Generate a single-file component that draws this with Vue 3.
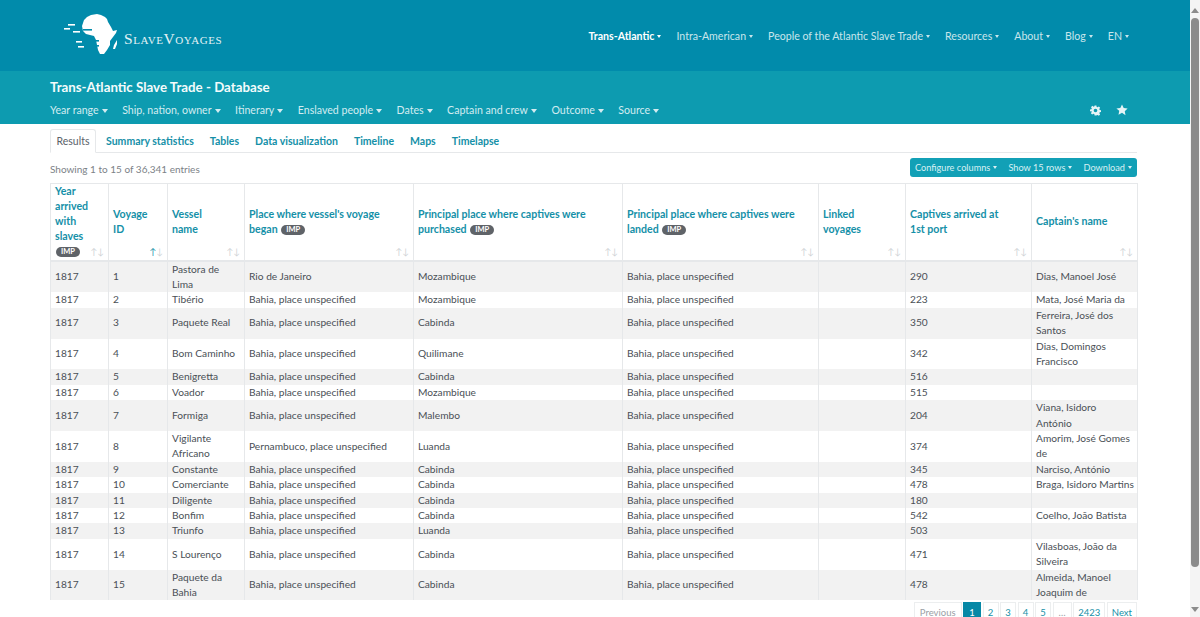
<script setup>
const topLinks = ['Trans-Atlantic', 'Intra-American', 'People of the Atlantic Slave Trade', 'Resources', 'About', 'Blog', 'EN']
const filters = ['Year range', 'Ship, nation, owner', 'Itinerary', 'Enslaved people', 'Dates', 'Captain and crew', 'Outcome', 'Source']
const tabs = ['Results', 'Summary statistics', 'Tables', 'Data visualization', 'Timeline', 'Maps', 'Timelapse']
const pages = ['Previous', '1', '2', '3', '4', '5', '…', '2423', 'Next']

const columns = [
  { w: 58, title: 'Year arrived with slaves', imp: true },
  { w: 59, title: 'Voyage ID', sorted: true },
  { w: 77, title: 'Vessel name' },
  { w: 169, title: "Place where vessel's voyage began", imp: true },
  { w: 209, title: 'Principal place where captives were purchased', imp: true },
  { w: 196, title: 'Principal place where captives were landed', imp: true },
  { w: 87, title: 'Linked voyages' },
  { w: 126, title: 'Captives arrived at 1st port' },
  { w: 106, title: "Captain's name" }
]

const bahia = 'Bahia, place unspecified'
const rows = [
  [1, 'Pastora de Lima', 'Rio de Janeiro', 'Mozambique', 290, 'Dias, Manoel José'],
  [2, 'Tibério', bahia, 'Mozambique', 223, 'Mata, José Maria da'],
  [3, 'Paquete Real', bahia, 'Cabinda', 350, 'Ferreira, José dos Santos'],
  [4, 'Bom Caminho', bahia, 'Quilimane', 342, 'Dias, Domingos Francisco'],
  [5, 'Benigretta', bahia, 'Cabinda', 516, ''],
  [6, 'Voador', bahia, 'Mozambique', 515, ''],
  [7, 'Formiga', bahia, 'Malembo', 204, 'Viana, Isidoro António'],
  [8, 'Vigilante Africano', 'Pernambuco, place unspecified', 'Luanda', 374, 'Amorim, José Gomes de'],
  [9, 'Constante', bahia, 'Cabinda', 345, 'Narciso, António'],
  [10, 'Comerciante', bahia, 'Cabinda', 478, 'Braga, Isidoro Martins'],
  [11, 'Diligente', bahia, 'Cabinda', 180, ''],
  [12, 'Bonfim', bahia, 'Cabinda', 542, 'Coelho, João Batista'],
  [13, 'Triunfo', bahia, 'Luanda', 503, ''],
  [14, 'S Lourenço', bahia, 'Cabinda', 471, 'Vilasboas, João da Silveira'],
  [15, 'Paquete da Bahia', bahia, 'Cabinda', 478, 'Almeida, Manoel Joaquim de']
]
</script>

<template>
  <div class="window">
    <div class="page">
      <header class="topbar">
        <a class="logo">
          <svg width="60" height="46" viewBox="0 0 60 46">
            <path class="land" d="M20 8 L23 5 L27 3 L33 2 L37 3 L41 5 L43 7 L44 10 L47 15 L49 19 L53 18 L52 21 L49 25 L46 29 L46 33 L43 38 L40 42 L36 42 L34 38 L33 33 L32 28 L30 24 L26 23 L22 22 L19 19 L18 14 Z" />
            <path class="land" d="M50 33 L53 28 L53 32 L51 37 L49 37 Z" />
            <g class="dash">
              <rect x="4" y="12" width="7" height="1.6" />
              <rect x="0" y="16" width="6" height="1.6" />
              <rect x="9" y="19" width="7" height="1.6" />
              <rect x="12" y="29" width="6" height="1.6" />
              <rect x="14" y="34" width="6" height="1.6" />
            </g>
            <g class="notch">
              <rect x="19" y="17" width="9" height="1.6" />
              <rect x="31" y="28" width="4" height="1.6" />
              <rect x="32" y="33" width="3" height="1.6" />
            </g>
          </svg>
          <span class="logo-text">SlaveVoyages</span>
        </a>
        <nav class="toplinks">
          <a v-for="(l, i) in topLinks" :key="l" :class="{ active: i === 0 }">{{ l }}<i class="caret small"></i></a>
        </nav>
      </header>

      <section class="subbar">
        <h1>Trans-Atlantic Slave Trade - Database</h1>
        <div class="filter-row">
          <a v-for="f in filters" :key="f">{{ f }}<i class="caret"></i></a>
          <span class="tools">
            <svg width="11" height="11" viewBox="0 0 24 24"><path d="M10 1h4l.6 3.2 2 .8 2.7-1.8 2.8 2.8-1.8 2.7.8 2 3.200.6v4l-3.200.6-.8 2 1.800 2.700-2.800 2.800-2.700-1.800-2 .8L14 23h-4l-.6-3.200-2-.8-2.700 1.800-2.800-2.800 1.800-2.700-.8-2L0 14v-4l3.200-.6.8-2L2.200 4.700 5 1.900l2.700 1.800 2-.8zM12 8a4 4 0 1 0 0 8 4 4 0 0 0 0-8z" fill-rule="evenodd" /></svg>
            <svg width="12" height="12" viewBox="0 0 24 24"><path d="M12 1l3.400 7.200 7.800 1-5.700 5.400 1.500 7.800L12 17.600l-7 3.800 1.500-7.800L.8 9.200l7.800-1z" /></svg>
          </span>
        </div>
      </section>

      <main class="content">
        <ul class="tabs">
          <li v-for="(t, i) in tabs" :key="t" :class="{ active: i === 0 }">{{ t }}</li>
        </ul>

        <div class="toolbar">
          <span class="entries">Showing 1 to 15 of 36,341 entries</span>
          <div class="btn-group">
            <a>Configure columns<i class="caret small"></i></a>
            <a>Show 15 rows<i class="caret small"></i></a>
            <a>Download<i class="caret small"></i></a>
          </div>
        </div>

        <table>
          <colgroup>
            <col v-for="c in columns" :key="c.title" :style="{ width: c.w + 'px' }" />
          </colgroup>
          <thead>
            <tr>
              <th v-for="c in columns" :key="c.title">
                {{ c.title }}
                <span v-if="c.imp" class="imp">IMP</span>
                <span class="sort"><b :class="{ on: c.sorted }">↑</b><b>↓</b></span>
              </th>
            </tr>
          </thead>
          <tbody>
            <tr v-for="r in rows" :key="r[0]">
              <td>1817</td>
              <td>{{ r[0] }}</td>
              <td>{{ r[1] }}</td>
              <td>{{ r[2] }}</td>
              <td>{{ r[3] }}</td>
              <td>{{ bahia }}</td>
              <td></td>
              <td>{{ r[4] }}</td>
              <td>{{ r[5] }}</td>
            </tr>
          </tbody>
        </table>

        <ul class="pager">
          <li v-for="p in pages" :key="p" :class="{ current: p === '1', muted: p === 'Previous' || p === '…' }">{{ p }}</li>
        </ul>
      </main>
    </div>

    <aside class="scrollbar">
      <span class="arrow up"></span>
      <span class="thumb"></span>
      <span class="arrow down"></span>
    </aside>
  </div>
</template>

<style>
html, body { margin: 0; height: 100%; overflow: hidden; }
</style>

<style scoped>
.window {
  display: flex;
  height: 617px;
  overflow: hidden;
  font-family: Lato, "Open Sans", sans-serif;
  font-size: 10.2px;
  color: #4a5056;
  background: #fff;
}
.page { flex: 1; min-width: 0; overflow: hidden; }

/* top bar */
.topbar {
  height: 71px;
  box-sizing: border-box;
  background: #018bab;
  display: flex;
  align-items: center;
  padding: 0 61px 0 64px;
  justify-content: space-between;
}
.logo { display: flex; align-items: center; margin-top: -1px; }
.land { fill: #fff; }
.dash rect { fill: #fff; }
.notch rect { fill: #018bab; }
.logo-text {
  font-family: "Liberation Serif", serif;
  font-variant: small-caps;
  font-size: 15.5px;
  letter-spacing: 0.6px;
  color: #e4f2f5;
  margin-top: 8px;
}
.toplinks { display: flex; gap: 15px; font-size: 10.6px; }
.toplinks a { color: #c9e6ec; white-space: nowrap; }
.toplinks a.active { color: #fff; font-weight: 700; }

/* second bar */
.subbar {
  height: 53px;
  box-sizing: border-box;
  background: #0d9bb0;
  padding: 9px 62px 0 50px;
  color: #fff;
}
.subbar h1 { margin: 0; font-size: 13.300px; line-height: 15px; font-weight: 700; color: #f4fbfc; }
.filter-row { display: flex; align-items: center; gap: 14.500px; margin-top: 8px; line-height: 14px; font-size: 10.6px; }
.filter-row a { color: #d3ecf1; white-space: nowrap; }
.tools { margin-left: auto; display: flex; align-items: center; gap: 15px; }
.tools svg { fill: #e6f4f6; display: block; }

.caret {
  display: inline-block;
  margin-left: 3px;
  vertical-align: 1px;
  border-top: 4px solid currentColor;
  border-left: 3.500px solid transparent;
  border-right: 3.500px solid transparent;
}
.caret.small {
  border-top-width: 3px;
  border-left-width: 2.500px;
  border-right-width: 2.500px;
  vertical-align: 2px;
}

/* main area */
.content { padding: 6px 53px 0 50px; }
.tabs {
  list-style: none;
  margin: 0;
  padding: 0;
  display: flex;
  height: 22px;
  border-bottom: 1px solid #e6e8ea;
  font-size: 10.5px;
}
.tabs li {
  padding: 0 8px;
  line-height: 23px;
  color: #1590a8;
  font-weight: 700;
  white-space: nowrap;
}
.tabs li.active {
  padding: 0;
  width: 44px;
  margin-right: 2px;
  height: 22px;
  text-align: center;
  color: #5a6268;
  font-weight: 400;
  background: #fff;
  border: 1px solid #e6e8ea;
  border-bottom-color: #fff;
  border-radius: 3px 3px 0 0;
  margin-top: -1px;
}
.toolbar {
  display: flex;
  justify-content: space-between;
  align-items: center;
  height: 19px;
  margin-top: 5px;
  margin-bottom: 6px;
}
.entries { color: #7c8287; padding-top: 3px; font-size: 10px; }
.btn-group {
  width: 227px;
  height: 19px;
  box-sizing: border-box;
  background: #12a0b6;
  border-radius: 3px;
  display: flex;
  align-items: center;
  justify-content: space-between;
  padding: 0 5px;
  font-size: 9.200px;
}
.btn-group a { color: #d8f0f4; white-space: nowrap; }

/* table */
table {
  width: 1087px;
  table-layout: fixed;
  border-collapse: collapse;
  line-height: 15.400px;
}
th, td {
  border: 1px solid #e6e8ea;
  padding: 0 3px 0 4px;
  vertical-align: middle;
  text-align: left;
}
th {
  position: relative;
  height: 77px;
  box-sizing: border-box;
  padding-right: 20px;
  font-size: 10.6px;
  line-height: 15.100px;
  font-weight: 700;
  color: #1590a8;
  border-bottom-width: 2px;
}
td { border-top: none; border-bottom: none; overflow-wrap: break-word; }
tbody tr:nth-child(odd) { background: #f2f2f2; }
.imp {
  display: inline-block;
  background: #5f6368;
  color: #fff;
  font-size: 7.500px;
  font-weight: 700;
  line-height: 10px;
  padding: 0 5px;
  border-radius: 6px;
  vertical-align: top;
  margin-top: 3px;
  margin-left: 1px;
}
.sort {
  position: absolute;
  right: 4px;
  bottom: 3px;
  font-size: 9px;
  line-height: 10px;
  color: #cfd3d6;
  display: flex;
}
.sort b { font-weight: 400; }
.sort b.on { color: #1590a8; }

/* pagination */
.pager {
  list-style: none;
  margin: 2px 0 0;
  padding: 0;
  display: flex;
  justify-content: flex-end;
  gap: 1.5px;
  font-size: 9.500px;
  line-height: 20px;
}
.pager li {
  padding: 0 4px;
  min-width: 6px;
  text-align: center;
  border: 1px solid #eceeef;
  color: #1590a8;
}
.pager li.muted { color: #9aa0a5; padding: 0 5px; }
.pager li.current { background: #0788a6; color: #fff; border-color: #0788a6; padding: 0 5px; }

/* scrollbar */
.scrollbar {
  width: 10px;
  background: #f4f4f4;
  display: flex;
  flex-direction: column;
  align-items: center;
  padding: 8px 0 5px;
  box-sizing: border-box;
}
.thumb { width: 8px; height: 549px; margin-top: 5px; background: #8b8b8b; border-radius: 4px; }
.arrow { width: 0; height: 0; border-left: 4px solid transparent; border-right: 4px solid transparent; }
.arrow.up { border-bottom: 5px solid #8b8b8b; }
.arrow.down { border-top: 5px solid #8b8b8b; margin-top: auto; }
</style>
